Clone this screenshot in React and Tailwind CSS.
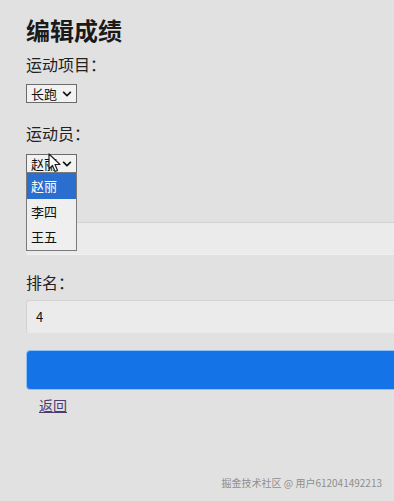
import React from "react";
import { FaChevronDown } from "react-icons/fa";

const font = { fontFamily: '"Noto Sans CJK SC", "Noto Sans", sans-serif' };

const FakeSelect = ({ value }) => (
  <div className="flex items-center justify-between w-[51px] h-[19px] border border-[#6b6b6b] bg-[#f2f2f2] pl-[4px] pr-[4px] text-[13px] leading-none text-[#111]">
    <span>{value}</span>
    <FaChevronDown className="text-[10px] text-[#111]" />
  </div>
);

const Cursor = () => (
  <svg className="absolute left-[22px] top-[-1px] z-20" width="14" height="20" viewBox="0 0 14 20">
    <path d="M1 1 L1 16 L4.5 12.5 L7 18.5 L9.5 17.5 L7 11.5 L12 11.5 Z" fill="#fff" stroke="#222" strokeWidth="1.2" strokeLinejoin="round" />
  </svg>
);

export default function App() {
  const athletes = ["赵丽", "李四", "王五"];

  return (
    <div className="h-[501px] w-[394px] overflow-hidden bg-[#e1e1e1] relative" style={font}>
      <div className="pl-[26px] pt-[14px] w-[440px]">
        <h2 className="text-[24px] leading-[32px] font-bold text-[#1a1a1a]">编辑成绩</h2>

        {/* 运动项目 */}
        <div className="mt-[6px] text-[16px] leading-[24px] text-[#222]">运动项目：</div>
        <div className="mt-[8px]">
          <FakeSelect value="长跑" />
        </div>

        {/* 运动员 */}
        <div className="mt-[18px] text-[16px] leading-[24px] text-[#222]">运动员：</div>
        <div className="mt-[9px] relative w-[51px]">
          <FakeSelect value="赵丽" />
          <Cursor />
          <div className="absolute left-0 top-[18px] z-10 w-[51px] border border-[#7a7a7a] bg-[#efefef] text-[13px] text-[#111]">
            {athletes.map((name, i) => (
              <div
                key={name}
                className={`h-[25.5px] flex items-center pl-[4px] ${i === 0 ? "bg-[#2a6fd0] text-white" : ""}`}
              >
                {name}
              </div>
            ))}
          </div>
        </div>

        {/* 成绩 (label hidden under the open dropdown) */}
        <div className="mt-[20px] h-[24px]"></div>
        <div className="mt-[5px] h-[33px] border-t border-[#d2d2d2] border-b border-b-[#f0f0f0] bg-[#ebebeb] rounded-[3px]"></div>

        {/* 排名 */}
        <div className="mt-[15px] text-[16px] leading-[24px] text-[#222]">排名：</div>
        <div className="mt-[6px] h-[33px] flex items-center pl-[9px] border-t border-l border-[#d2d2d2] bg-[#ebebeb] rounded-[3px] text-[13px] text-[#111]">
          4
        </div>

        <button className="mt-[17px] block w-full h-[40px] rounded-[4px] bg-[#1473e6] border border-[#8fc2f5]"></button>

        <a href="#" className="inline-block mt-[5px] ml-[13px] text-[14px] leading-[20px] text-[#4a3c6e] underline">
          返回
        </a>
      </div>

      <div className="absolute right-[12px] bottom-[13px] text-[10px] leading-none text-[#8f8f8f]">
        掘金技术社区 @ 用户612041492213
      </div>
    </div>
  );
}
